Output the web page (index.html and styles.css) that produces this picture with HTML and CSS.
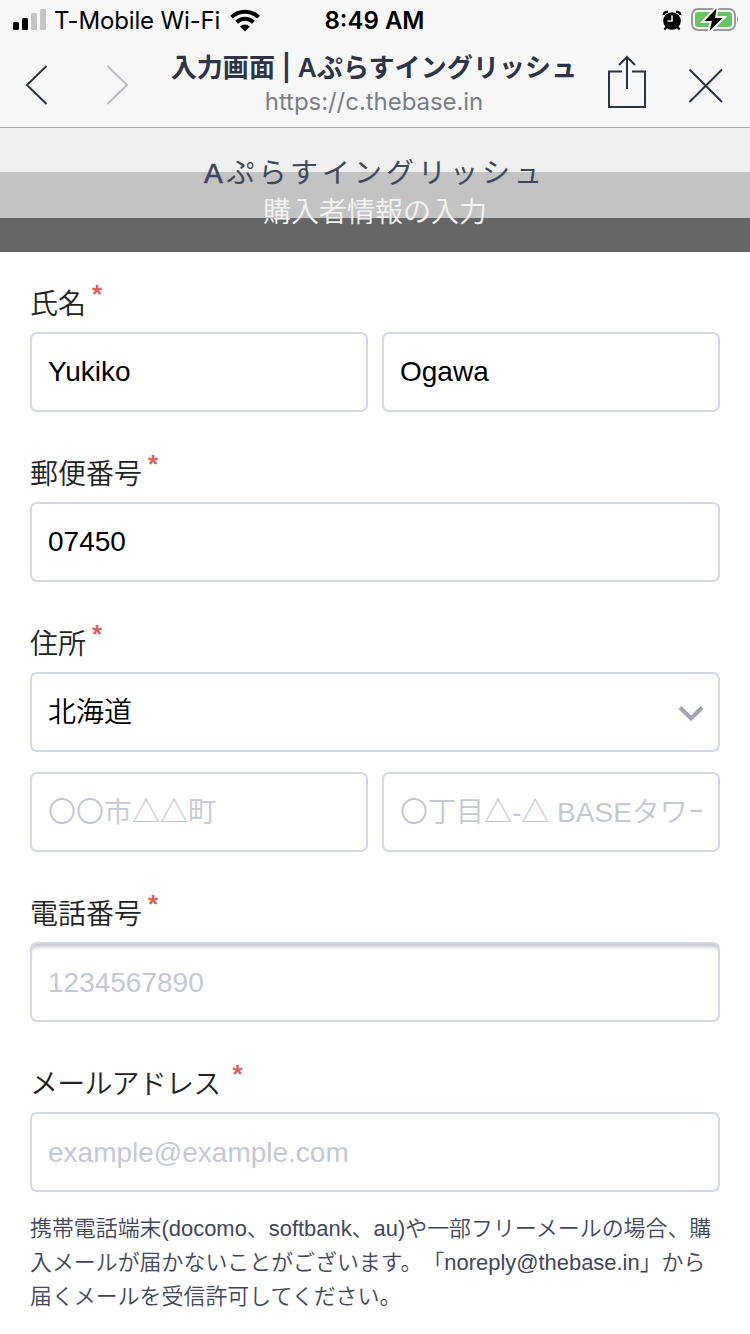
FILE: index.html
```html
<!DOCTYPE html>
<html lang="ja">
<head>
  <meta charset="UTF-8">
  <title>入力画面 | Aぷらすイングリッシュ</title>
  <meta name="viewport" content="width=device-width, initial-scale=1.0">
  <link rel="stylesheet" href="styles.css">
</head>
<body>
  <header class="browser">
    <!-- Status bar -->
    <div class="status">
      <div class="status-left">
        <svg class="signal" width="34" height="22" viewBox="0 0 34 22">
          <rect x="0" y="13" width="6" height="8" rx="1.5"/>
          <rect x="9" y="9" width="6" height="12" rx="1.5"/>
          <rect class="off" x="18" y="4" width="6" height="17" rx="1.5"/>
          <rect class="off" x="27" y="0" width="6" height="21" rx="1.5"/>
        </svg>
        <span class="carrier">T-Mobile Wi-Fi</span>
        <svg class="wifi" width="30" height="23" viewBox="0 0 30 23">
          <path d="M1.500 8.200C9 .8 21 .8 28.500 8.200M6.500 13.200C11.500 8.600 18.500 8.600 23.500 13.200"/>
          <path class="dot" d="M10 17.500Q15 13.500 20 17.500L15 22.500Z"/>
        </svg>
      </div>
      <div class="time">8:49 AM</div>
      <div class="status-right">
        <svg width="20" height="21" viewBox="0 0 20 21">
          <path d="M1.500 5Q2 1.500 6 1.800M18.500 5Q18 1.500 14 1.800M4.500 17L2.500 19.500M15.500 17L17.500 19.500" fill="none" stroke="#000" stroke-width="2.200"/>
          <circle cx="10" cy="11" r="8.800"/>
          <path d="M10 5.500V11H5.500" fill="none" stroke="#f7f7f7" stroke-width="1.600"/>
        </svg>
        <svg class="battery" width="49" height="26" viewBox="0 0 49 26">
          <rect x="1" y="2" width="43" height="21" rx="6" fill="none" stroke="#9b9b9b" stroke-width="2"/>
          <path d="M46 9.500Q48.500 12.500 46 15.500Z" fill="#9b9b9b"/>
          <rect x="4" y="5" width="37" height="15" rx="3" fill="#65c466"/>
          <path d="M25.500 1.500L13.500 14H21L18.500 24L31.500 11H24Z" stroke="#f7f7f7" stroke-width="4"/>
          <path d="M25.500 1.500L13.500 14H21L18.500 24L31.500 11H24Z"/>
        </svg>
      </div>
    </div>

    <!-- In-app browser toolbar -->
    <div class="toolbar">
      <svg class="nav" width="140" height="56" viewBox="0 0 140 56">
        <path d="M46.500 9L27 28L46.500 47"/>
        <path class="disabled" d="M107.500 9L127 28L107.500 47"/>
      </svg>
      <div class="page">
        <div class="page-title">入力画面 | Aぷらすイングリッシュ</div>
        <div class="page-url">https://c.thebase.in</div>
      </div>
      <svg class="actions" width="126" height="60" viewBox="0 0 126 60">
        <path d="M14 17.500H1V53H37V17.500H24M19 35V3.500M11 11L19 3L27 11"/>
        <path d="M81.500 15.500L114 48M114 15.500L81.500 48"/>
      </svg>
    </div>
  </header>

  <div class="shop">
    <h1><span>A</span>ぷらすイングリッシュ</h1>
    <h2>購入者情報の入力</h2>
  </div>

  <form class="form">
    <div class="group">
      <label for="last-name">氏名<span class="required">*</span></label>
      <div class="row">
        <input id="last-name" type="text" value="Yukiko">
        <input type="text" value="Ogawa">
      </div>
    </div>

    <div class="group">
      <label for="zip">郵便番号<span class="required">*</span></label>
      <input id="zip" type="text" value="07450">
    </div>

    <div class="group">
      <label for="pref">住所<span class="required">*</span></label>
      <div class="select">
        <select id="pref">
          <option>北海道</option>
        </select>
        <svg width="26" height="17" viewBox="0 0 26 17">
          <path d="M2 2.500L13 13.500L24 2.500"/>
        </svg>
      </div>
      <div class="row address">
        <input type="text" placeholder="〇〇市△△町">
        <input type="text" placeholder="〇丁目△-△ BASEタワー">
      </div>
    </div>

    <div class="group">
      <label for="tel">電話番号<span class="required">*</span></label>
      <input id="tel" class="shadow" type="tel" placeholder="1234567890">
    </div>

    <div class="group">
      <label for="email"><span class="kana">メールアドレス</span><span class="required wide">*</span></label>
      <input id="email" type="email" placeholder="example@example.com">
      <p class="help">携帯電話端末(docomo、softbank、au)や一部フリーメールの場合、購<br>入メールが届かないことがございます。「noreply@thebase.in」から<br>届くメールを受信許可してください。</p>
    </div>
  </form>
</body>
</html>
```

FILE: styles.css
```css
* { box-sizing: border-box; }
body {
  margin: 0;
  background: #fff;
  color: #222;
  font-family: "Liberation Sans", "Noto Sans CJK JP", sans-serif;
  font-weight: 350;
  overflow: hidden;
}
svg { display: block; flex: none; }

.browser {
  height: 128px;
  background: #f7f7f7;
  border-bottom: 1px solid #aaadad;
  font-family: Inter, "Noto Sans CJK JP", sans-serif;
}
.status {
  display: grid;
  grid-template-columns: 1fr auto 1fr;
  align-items: center;
  height: 40px;
  padding: 0 10px 0 13px;
  color: #000;
}
.status-left, .status-right { display: flex; align-items: center; }
.status-right { justify-content: flex-end; gap: 9px; }
.signal .off { fill: #c5c5c5; }
.carrier {
  margin-left: 7px;
  font-size: 24px;
  font-weight: 400;
  letter-spacing: -0.15px;
  white-space: nowrap;
}
.wifi { margin-left: 10px; fill: none; stroke: #000; stroke-width: 4; }
.wifi .dot { fill: #000; stroke: none; }
.time { padding-right: 4px; font-size: 24px; font-weight: 600; }

.toolbar {
  display: flex;
  align-items: flex-start;
  height: 87px;
}
.nav {
  margin-top: 17px;
  fill: none;
  stroke: #2d3348;
  stroke-width: 2;
}
.nav .disabled { stroke: #bcbdc2; }
.page {
  width: 468px;
  text-align: center;
  white-space: nowrap;
}
.page-title {
  margin-top: 10px;
  color: #2d3348;
  font-size: 26px;
  font-weight: 600;
  letter-spacing: 0.1px;
  line-height: 36px;
}
.page-url {
  margin-top: 1px;
  color: #7c7e87;
  font-size: 24px;
  font-weight: 400;
  letter-spacing: -0.05px;
  line-height: 30px;
}
.actions {
  margin-top: 14px;
  fill: none;
  stroke: #2d3348;
  stroke-width: 2;
}

.shop {
  height: 124px;
  padding-top: 26px;
  background: linear-gradient(#f0f0f0 44px, #c3c3c3 44px, #c3c3c3 90px, #666 90px);
  text-align: center;
}
.shop h1 {
  margin: 0;
  color: #41465c;
  font-size: 28px;
  font-weight: 400;
  letter-spacing: 4px;
  line-height: 40px;
}
.shop h1 span { -webkit-text-stroke: 0.6px #41465c; }
.shop h2 {
  margin: 0;
  color: #f3f3f3;
  font-size: 28px;
  font-weight: 350;
  line-height: 38px;
}

.form { padding: 30px 30px 0; }
.group { margin-bottom: 40px; }
label {
  display: flex;
  align-items: flex-start;
  height: 50px;
  font-size: 28px;
  line-height: 46px;
}
.kana { letter-spacing: -0.8px; }
.required {
  margin-left: 6px;
  color: #d9625e;
  font-size: 26px;
  font-weight: 700;
  line-height: 24px;
}
.required.wide { margin-left: 12px; }
.row {
  display: grid;
  grid-template-columns: 1fr 1fr;
  gap: 14px;
}
.address { margin-top: 20px; }
input, select {
  display: block;
  width: 100%;
  height: 80px;
  padding: 0 16px;
  border: 2px solid #d5d7e0;
  border-radius: 7px;
  background: #fff;
  color: #000;
  font: 400 28px "Liberation Sans", "Noto Sans CJK JP", sans-serif;
  appearance: none;
}
select { font-weight: 350; }
input::placeholder { color: #c6c8d1; font-weight: 350; }
input:placeholder-shown { padding-top: 2px; }
.shadow { box-shadow: inset 0 6px 4px -3px #c4c5c9; }
.select { position: relative; }
.select svg {
  position: absolute;
  right: 16px;
  top: 33px;
  fill: none;
  stroke: #a0a4b2;
  stroke-width: 4;
}
.help {
  margin: 20px 0 0;
  color: #41465c;
  font-size: 21.93px;
  line-height: 34px;
  text-spacing-trim: space-all;
  white-space: nowrap;
}
```
